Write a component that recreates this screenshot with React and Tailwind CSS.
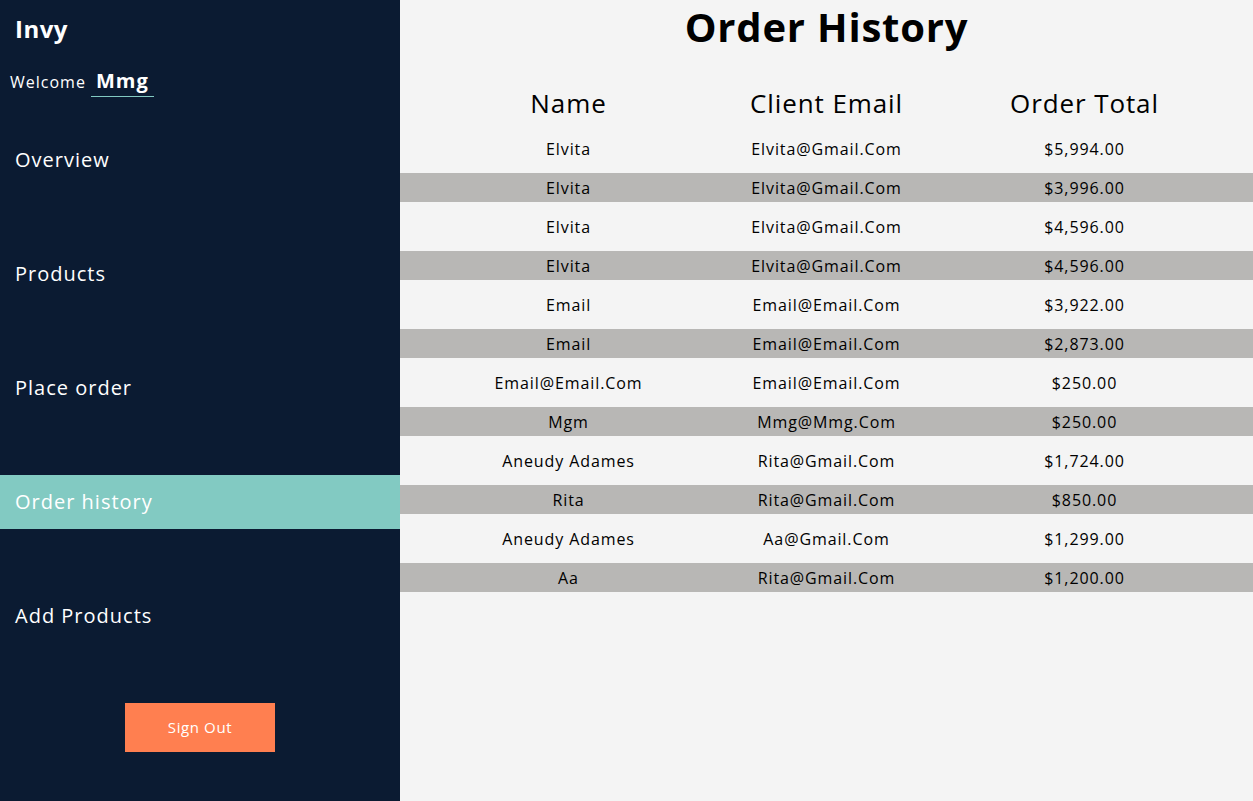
import React from "react";

const rows = [
  ["Elvita", "Elvita@Gmail.Com", "$5,994.00"],
  ["Elvita", "Elvita@Gmail.Com", "$3,996.00"],
  ["Elvita", "Elvita@Gmail.Com", "$4,596.00"],
  ["Elvita", "Elvita@Gmail.Com", "$4,596.00"],
  ["Email", "Email@Email.Com", "$3,922.00"],
  ["Email", "Email@Email.Com", "$2,873.00"],
  ["Email@Email.Com", "Email@Email.Com", "$250.00"],
  ["Mgm", "Mmg@Mmg.Com", "$250.00"],
  ["Aneudy Adames", "Rita@Gmail.Com", "$1,724.00"],
  ["Rita", "Rita@Gmail.Com", "$850.00"],
  ["Aneudy Adames", "Aa@Gmail.Com", "$1,299.00"],
  ["Aa", "Rita@Gmail.Com", "$1,200.00"],
];

const nav = ["Overview", "Products", "Place order", "Order history", "Add Products"];

export default function App() {
  return (
    <div
      className="flex w-full h-[801px] overflow-hidden"
      style={{ fontFamily: '"Open Sans", sans-serif' }}
    >
      <aside className="w-[400px] shrink-0 bg-[#0b1b32] text-white flex flex-col">
        <div className="pl-[15px] pt-[12px] h-[58px] text-[24px] font-bold leading-[34px] tracking-[0.5px]">Invy</div>
        <div className="flex items-end pl-[10px] h-[42px] -mt-[3px]">
          <span className="text-[16px] leading-[22px] pb-[4px] tracking-[1px]">Welcome</span>
          <span className="ml-[5px] px-[5px] border-b border-[#82cac2] text-[20px] font-bold leading-[28px] pb-[1px] tracking-[1px]">Mmg</span>
        </div>
        <div className="flex flex-col gap-[60px] mt-[36px]">
          {nav.map((n) => (
            <div
              key={n}
              className={`h-[54px] flex items-center pl-[15px] text-[20px] tracking-[1px] ${
                n === "Order history" ? "bg-[#82cac2]" : ""
              }`}
            >
              {n}
            </div>
          ))}
        </div>
        <div className="flex justify-center mt-[60px]">
          <button className="w-[150px] h-[49px] bg-[#ff7f50] text-white text-[15px] tracking-[0.6px]">Sign Out</button>
        </div>
      </aside>
      <main className="flex-1 bg-[#f4f4f4] text-black">
        <h1 className="text-center text-[40px] font-bold leading-[50px] pt-[2px] tracking-[0.8px]">Order History</h1>
        <div className="flex justify-center mt-[32px] h-[38px] items-center text-[26px] tracking-[0.9px]">
          <div className="w-[258px] text-center">Name</div>
          <div className="w-[258px] text-center">Client Email</div>
          <div className="w-[258px] text-center">Order Total</div>
        </div>
        <div className="flex flex-col gap-[10px] mt-[12px]">
          {rows.map((r, i) => (
            <div
              key={i}
              className={`flex justify-center h-[29px] items-center text-[16px] tracking-[0.9px] ${
                i % 2 === 1 ? "bg-[#b8b7b5]" : ""
              }`}
            >
              <div className="w-[258px] text-center">{r[0]}</div>
              <div className="w-[258px] text-center">{r[1]}</div>
              <div className="w-[258px] text-center">{r[2]}</div>
            </div>
          ))}
        </div>
      </main>
    </div>
  );
}
